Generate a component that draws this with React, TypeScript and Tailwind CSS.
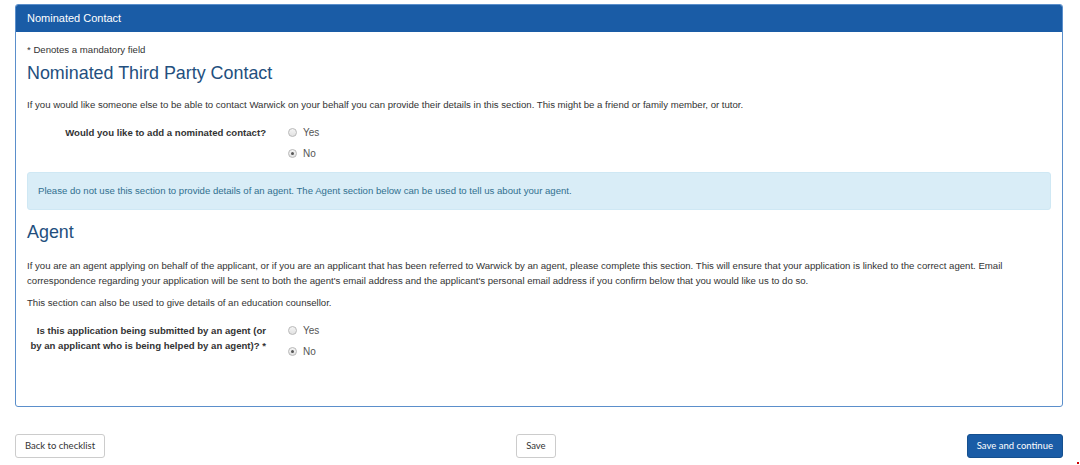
import React from "react";

function Radio({ label, checked }: { label: string; checked?: boolean }) {
  return (
    <label className="flex items-center gap-[6px] h-[21px]">
      <span className="w-[9px] h-[9px] rounded-full border border-[#b8b8b8] bg-gradient-to-b from-[#f4f4f4] to-[#e2e2e2] flex items-center justify-center">
        {checked && <span className="w-[3px] h-[3px] rounded-full bg-[#555]" />}
      </span>
      <span className="text-[10px] text-[#555]">{label}</span>
    </label>
  );
}

function Question({ lines, options }: { lines: string[]; options: { label: string; checked?: boolean }[] }) {
  return (
    <div className="flex">
      <div className="w-[239px] text-right font-bold text-[9.6px] leading-[15px] text-[#333] pt-[3px] whitespace-nowrap">
        {lines.map((l) => (
          <div key={l}>{l}</div>
        ))}
      </div>
      <div className="ml-[22px] flex flex-col">
        {options.map((o) => (
          <Radio key={o.label} label={o.label} checked={o.checked} />
        ))}
      </div>
    </div>
  );
}

export default function App() {
  return (
    <div className="w-[1080px] h-[465px] bg-white relative" style={{ fontFamily: '"Liberation Sans", Arial, sans-serif' }}>
      <div className="pt-[4px] pl-[15px] pr-[17px]">
        <div className="border border-[#5b8fcb] rounded-[3px] h-[403px] flex flex-col">
          <div className="bg-[#1a5ca6] h-[27px] flex items-center px-[11px] text-white text-[11px] rounded-t-[2px]">
            Nominated Contact
          </div>
          <div className="px-[11px] text-[#333] text-[9.6px]">
            <div className="mt-[11px] leading-[14px]">* Denotes a mandatory field</div>
            <h2 className="text-[17.9px] text-[#234f7e] mt-[4px] leading-[24px]">Nominated Third Party Contact</h2>
            <p className="mt-[13px] leading-[14px]">
              If you would like someone else to be able to contact Warwick on your behalf you can provide their details in this section. This might be a friend or family member, or tutor.
            </p>
            <div className="mt-[10px]">
              <Question
                lines={["Would you like to add a nominated contact?"]}
                options={[{ label: "Yes" }, { label: "No", checked: true }]}
              />
            </div>
            <div className="mt-[8px] bg-[#d9edf7] border border-[#cfe8f4] rounded-[3px] h-[38px] flex items-center px-[10px] text-[#31708f]">
              Please do not use this section to provide details of an agent. The Agent section below can be used to tell us about your agent.
            </div>
            <h2 className="text-[17.9px] text-[#234f7e] mt-[10px] leading-[24px]">Agent</h2>
            <p className="mt-[14px] leading-[15px]">
              If you are an agent applying on behalf of the applicant, or if you are an applicant that has been referred to Warwick by an agent, please complete this section. This will ensure that your application is linked to the correct agent. Email correspondence regarding your application will be sent to both the agent's email address and the applicant's personal email address if you confirm below that you would like us to do so.
            </p>
            <p className="mt-[7px] leading-[15px]">This section can also be used to give details of an education counsellor.</p>
            <div className="mt-[10px]">
              <Question
                lines={["Is this application being submitted by an agent (or", "by an applicant who is being helped by an agent)? *"]}
                options={[{ label: "Yes" }, { label: "No", checked: true }]}
              />
            </div>
          </div>
        </div>
      </div>
      <div className="mt-[27px] pl-[15px] pr-[17px] flex items-center justify-between" style={{ fontFamily: 'Lato, "Liberation Sans", sans-serif' }}>
        <button className="h-[24px] px-[9px] border border-[#ccc] rounded-[3px] bg-white text-[9.5px] text-[#333]">Back to checklist</button>
        <button className="h-[24px] px-[9px] border border-[#ccc] rounded-[3px] bg-white text-[9.5px] text-[#333]">Save</button>
        <button className="h-[24px] px-[9px] border border-[#15508f] rounded-[3px] bg-[#1a5ca6] text-[9.5px] text-white">Save and continue</button>
      </div>
      <span className="absolute left-[1077px] top-[462px] w-[2px] h-[2px] bg-[#c00]" />
    </div>
  );
}
